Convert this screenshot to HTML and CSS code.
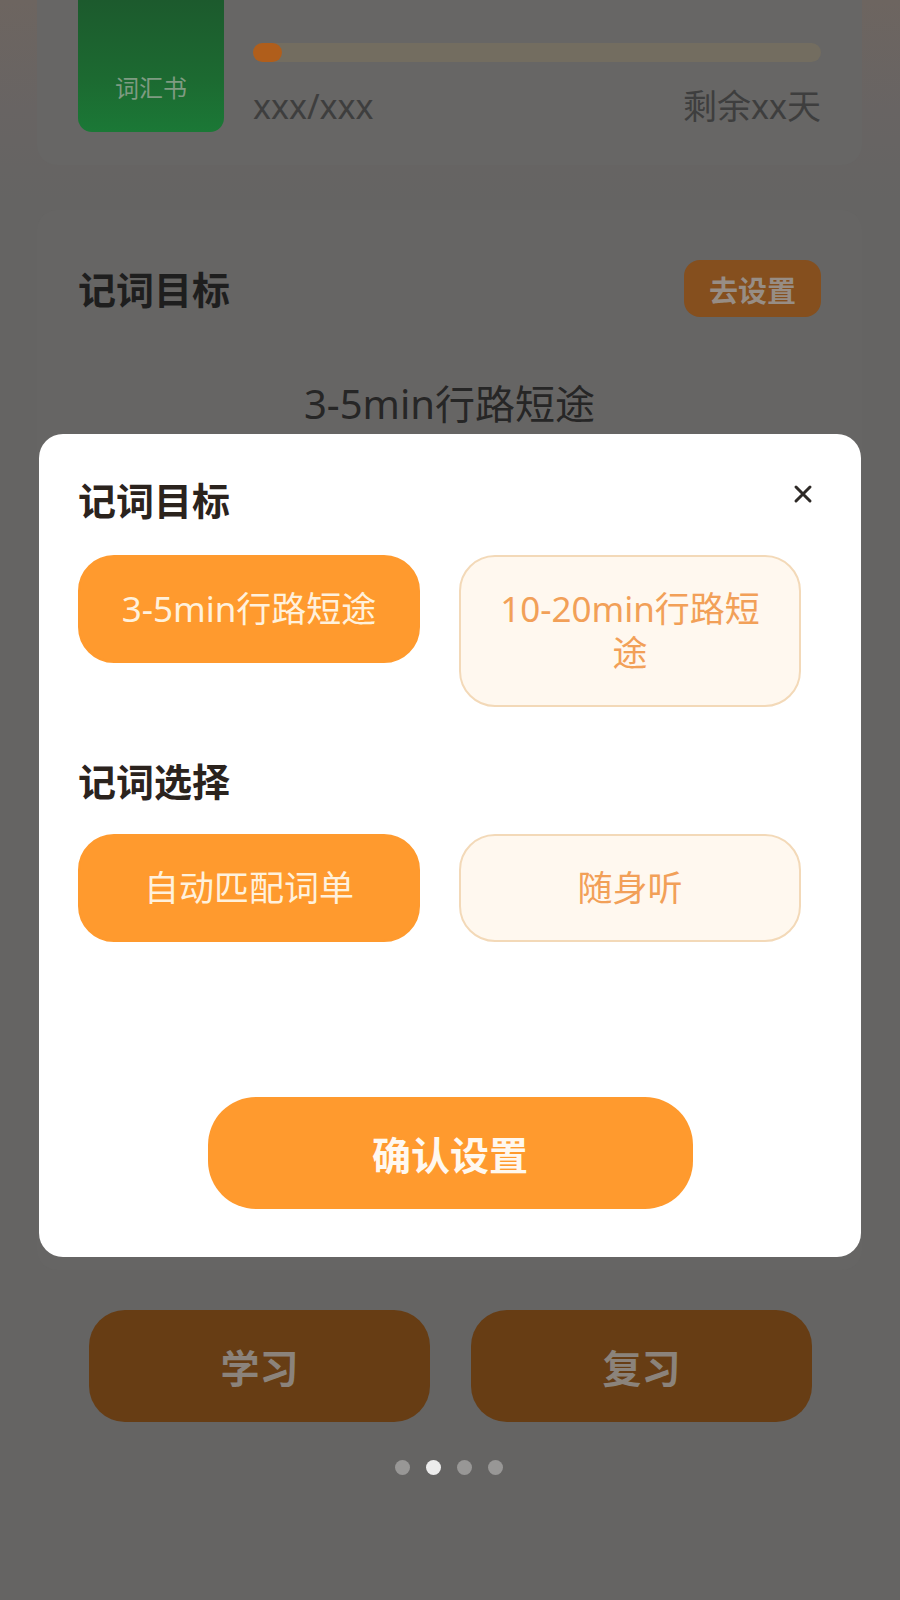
FILE: index.html
```html
<!DOCTYPE html>
<html lang="zh-CN">
<head>
<meta charset="utf-8">
<title>记词目标</title>
<link rel="stylesheet" href="styles.css">
</head>
<body>
<div class="page">
  <section class="book-card">
    <div class="book-cover"><span>词汇书</span></div>
    <div class="book-progress">
      <div class="track"><div class="fill" style="width:29px"></div></div>
      <div class="progress-text">
        <span>xxx/xxx</span>
        <span>剩余xx天</span>
      </div>
    </div>
  </section>

  <section class="goal-card">
    <div class="goal-head">
      <h2 class="page-title">记词目标</h2>
      <span class="set-btn">去设置</span>
    </div>
    <p class="goal-value">3-5min行路短途</p>
  </section>

  <div class="actions">
    <span class="action-btn">学习</span>
    <span class="action-btn">复习</span>
  </div>

  <div class="dots">
    <span class="dot"></span>
    <span class="dot active"></span>
    <span class="dot"></span>
    <span class="dot"></span>
  </div>
</div>

<div class="modal">
  <div class="modal-head">
    <h3 class="modal-title">记词目标</h3>
    <span class="close">
      <svg width="22" height="22" viewBox="0 0 22 22"><path d="M4 4 L18 18 M18 4 L4 18" stroke="#2e2a27" stroke-width="3" stroke-linecap="round" fill="none"/></svg>
    </span>
  </div>
  <div class="options">
    <div class="option selected">3-5min行路短途</div>
    <div class="option">10-20min行路短途</div>
  </div>

  <h3 class="modal-title section">记词选择</h3>
  <div class="options second">
    <div class="option selected">自动匹配词单</div>
    <div class="option">随身听</div>
  </div>

  <div class="confirm">确认设置</div>
</div>
</body>
</html>
```

FILE: styles.css
```css
* { box-sizing: border-box; }

html, body {
  margin: 0;
  padding: 0;
}

body {
  width: 900px;
  height: 1600px;
  overflow: hidden;
  position: relative;
  font-family: "Noto Sans", "Noto Sans CJK SC", sans-serif;
  background: linear-gradient(180deg, #6d6560 0px, #686463 110px, #656463 200px);
}

.page {
  padding: 0 38px 0 37px;
}

/* card 1 */
.book-card {
  height: 165px;
  background: #676665;
  border-radius: 0 0 20px 20px;
  padding: 0 41px;
  display: flex;
}

.book-cover {
  width: 146px;
  height: 132px;
  border-radius: 0 0 14px 14px;
  background: linear-gradient(180deg, #1c5a2d 0%, #1c6a31 60%, #1b7836 100%);
  padding-top: 70px;
  text-align: center;
  font-size: 24px;
  line-height: 36px;
  color: #7f9b82;
}

.book-progress {
  flex: 1;
  margin-left: 29px;
  padding-top: 43px;
}

.track {
  height: 19px;
  border-radius: 10px;
  background: #736d60;
}

.fill {
  height: 19px;
  border-radius: 10px;
  background: #b05e1b;
}

.progress-text {
  margin-top: 22px;
  display: flex;
  justify-content: space-between;
  font-size: 34px;
  line-height: 44px;
  color: #3e3e3e;
}

/* card 2 */
.goal-card {
  margin-top: 45px;
  height: 1060px;
  background: #666564;
  border-radius: 20px;
  padding: 50px 41px 0;
}

.goal-head {
  display: flex;
  justify-content: space-between;
  align-items: center;
}

.page-title {
  margin: 0;
  font-size: 38px;
  line-height: 50px;
  font-weight: 700;
  color: #1e1e1e;
}

.set-btn {
  width: 137px;
  height: 57px;
  border-radius: 16px;
  background: #854f1e;
  color: #978d85;
  font-size: 29px;
  font-weight: 700;
  display: flex;
  align-items: center;
  justify-content: center;
}

.goal-value {
  margin: 62px 0 0;
  text-align: center;
  font-size: 40px;
  line-height: 50px;
  color: #262626;
}

/* actions */
.actions {
  margin-top: 40px;
  padding: 0 52px;
  display: grid;
  grid-template-columns: 341px 341px;
  gap: 41px;
}

.action-btn {
  height: 112px;
  border-radius: 36px;
  background: #673d14;
  color: #8b837b;
  font-size: 39px;
  font-weight: 700;
  display: flex;
  align-items: center;
  justify-content: center;
}

.dots {
  margin-top: 38px;
  display: flex;
  justify-content: center;
  gap: 16px;
  padding-right: 2px;
}

.dot {
  width: 15px;
  height: 15px;
  border-radius: 50%;
  background: #989796;
}

.dot.active {
  background: #ececec;
}

/* modal */
.modal {
  position: absolute;
  top: 434px;
  left: 39px;
  width: 822px;
  background: #ffffff;
  border-radius: 24px;
  padding: 41px 39px 48px;
}

.modal-head {
  display: flex;
  justify-content: space-between;
  align-items: flex-start;
}

.modal-title {
  margin: 0;
  font-size: 38px;
  line-height: 50px;
  font-weight: 700;
  color: #2b231d;
}

.modal-title.section {
  margin-top: 49px;
}

.close {
  margin-top: 8px;
  margin-right: 8px;
  width: 22px;
  height: 22px;
  display: block;
}

.close svg {
  display: block;
}

.options {
  margin-top: 30px;
  display: grid;
  grid-template-columns: 342px 342px;
  gap: 39px;
  align-items: start;
}

.options.second {
  margin-top: 28px;
}

.option {
  border: 2px solid #f3d9b8;
  border-radius: 36px;
  background: #fff8ef;
  color: #f2a058;
  padding: 30px 36px;
  font-size: 35px;
  line-height: 44px;
  text-align: center;
}

.option.selected {
  background: #ff9a2e;
  border-color: #ff9a2e;
  color: #fff1dc;
}

.confirm {
  margin: 155px auto 0;
  width: 485px;
  height: 112px;
  border-radius: 48px;
  background: #ff9a2e;
  color: #fff8ef;
  font-size: 39px;
  font-weight: 700;
  display: flex;
  align-items: center;
  justify-content: center;
}
```
